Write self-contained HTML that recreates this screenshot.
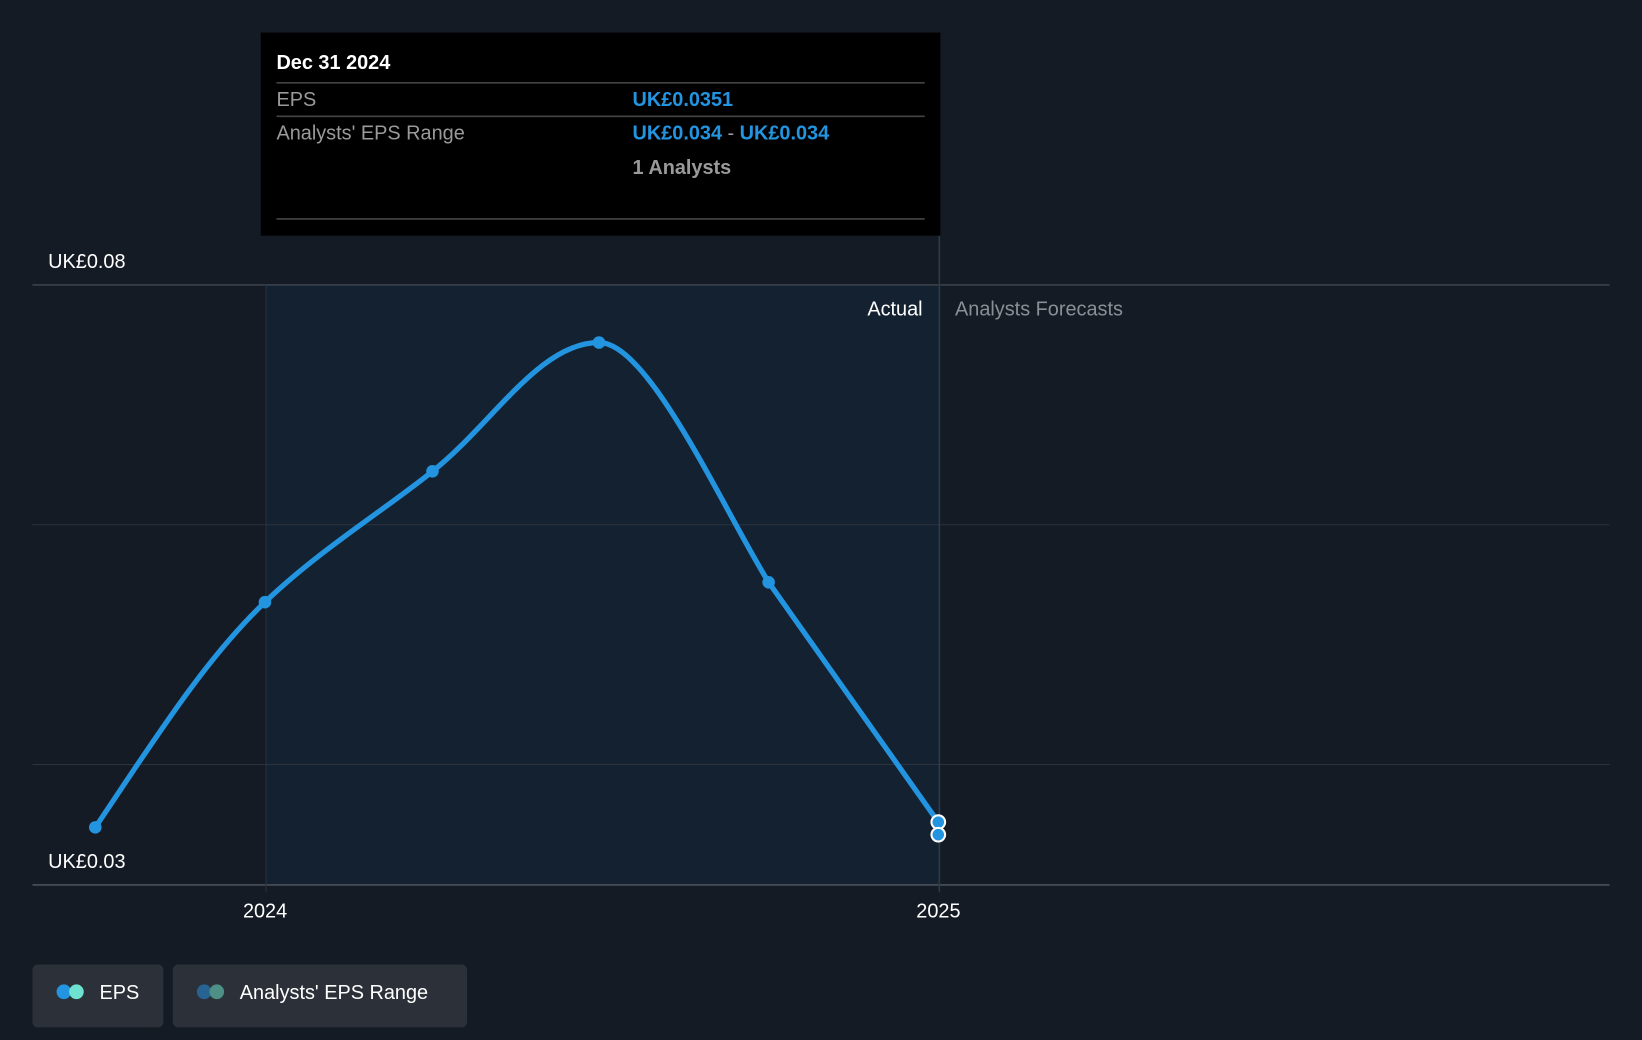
<!DOCTYPE html>
<html><head><meta charset="utf-8"><style>
html,body{margin:0;padding:0;background:#151b24;}
svg{display:block;}
text{font-family:"Liberation Sans",sans-serif;}
</style></head><body>
<svg width="1642" height="1040" viewBox="0 0 1568 993" xmlns="http://www.w3.org/2000/svg">
<rect width="1568" height="993" fill="#151b24"/>
<rect x="254" y="272" width="644" height="573" fill="#142130"/>
<line x1="31" y1="272" x2="1537" y2="272" stroke="#3a414b" stroke-width="1.5"/>
<line x1="31" y1="501" x2="1537" y2="501" stroke="#2c333d" stroke-width="1"/>
<line x1="31" y1="730" x2="1537" y2="730" stroke="#2c333d" stroke-width="1"/>
<line x1="31" y1="845" x2="1537" y2="845" stroke="#4a515b" stroke-width="1.5"/>
<line x1="254" y1="272" x2="254" y2="852" stroke="#26323f" stroke-width="1"/>
<line x1="897" y1="225" x2="897" y2="852" stroke="#2c3a4b" stroke-width="1.5"/>
<text x="46" y="256" fill="#fff" font-size="19">UK£0.08</text>
<text x="46" y="829" fill="#fff" font-size="19">UK£0.03</text>
<text x="232" y="876" fill="#fff" font-size="19">2024</text>
<text x="875" y="876" fill="#fff" font-size="19">2025</text>
<text x="881" y="301" fill="#fff" font-size="19" text-anchor="end">Actual</text>
<text x="912" y="301" fill="#8a8f96" font-size="19">Analysts Forecasts</text>
<path d="M91,790 C145,710 195,630 253,575 C305,525 370,485 413,450 C470,405 515,327 572,327 C620,327 690,485 734,556 L896,785" fill="none" stroke="#2394e0" stroke-width="5" stroke-linecap="round"/>
<g fill="#2394e0"><circle cx="91" cy="790" r="6"/><circle cx="253" cy="575" r="6"/><circle cx="413" cy="450" r="6"/><circle cx="572" cy="327" r="6"/><circle cx="734" cy="556" r="6"/></g>
<circle cx="896" cy="785" r="6.5" fill="#2394e0" stroke="#fff" stroke-width="2"/>
<circle cx="896" cy="797" r="6.5" fill="#2394e0" stroke="#fff" stroke-width="2"/>
<rect x="249" y="31" width="649" height="194" fill="#000"/>
<text x="264" y="66" fill="#fff" font-size="19" font-weight="bold">Dec 31 2024</text>
<line x1="264" y1="79" x2="883" y2="79" stroke="#444" stroke-width="1.5"/>
<text x="264" y="101" fill="#9a9a9a" font-size="19">EPS</text>
<text x="604" y="101" fill="#2394e0" font-size="19" font-weight="bold">UK£0.0351</text>
<line x1="264" y1="111" x2="883" y2="111" stroke="#444" stroke-width="1.5"/>
<text x="264" y="133" fill="#9a9a9a" font-size="19">Analysts' EPS Range</text>
<text x="604" y="133" font-size="19" font-weight="bold"><tspan fill="#2394e0">UK£0.034</tspan><tspan fill="#9a9a9a" font-weight="normal"> - </tspan><tspan fill="#2394e0">UK£0.034</tspan></text>
<text x="604" y="166" fill="#9a9a9a" font-size="19" font-weight="bold">1 Analysts</text>
<line x1="264" y1="209" x2="883" y2="209" stroke="#444" stroke-width="1.5"/>
<rect x="31" y="921" width="125" height="60" rx="5" fill="#2b3039"/>
<circle cx="61" cy="947" r="7" fill="#2394e0"/><circle cx="73" cy="947" r="7" fill="#6ee2d0"/>
<text x="95" y="954" fill="#fff" font-size="19">EPS</text>
<rect x="165" y="921" width="281" height="60" rx="5" fill="#2b3039"/>
<circle cx="195" cy="947" r="7" fill="#276393"/><circle cx="207" cy="947" r="7" fill="#4e8f86"/>
<text x="229" y="954" fill="#fff" font-size="19">Analysts' EPS Range</text>
</svg>
</body></html>
